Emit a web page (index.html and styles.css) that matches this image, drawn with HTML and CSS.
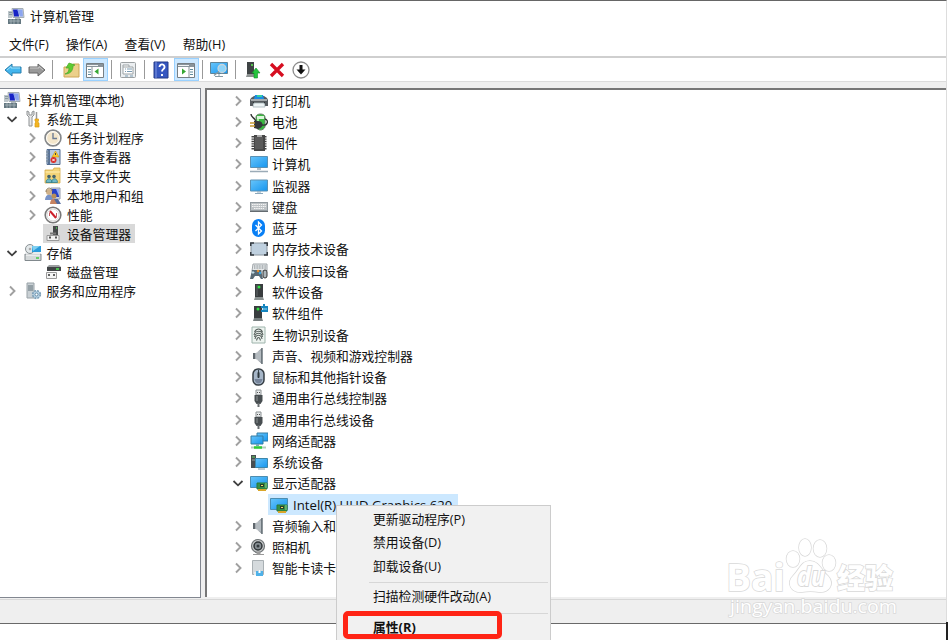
FILE: index.html
```html
<!DOCTYPE html>
<html lang="zh-CN">
<head>
  <meta charset="UTF-8">
  <title>计算机管理</title>
  <link rel="stylesheet" href="styles.css">
</head>
<body>
  <svg class="sprite" xmlns="http://www.w3.org/2000/svg">
    <defs>
      <linearGradient id="sky" x1="0" y1="0" x2="1" y2="1"><stop offset="0" stop-color="#67c5fb"/><stop offset="1" stop-color="#1695ee"/></linearGradient>
      <linearGradient id="metal" x1="0" y1="0" x2="1" y2="0"><stop offset="0" stop-color="#737b82"/><stop offset=".5" stop-color="#c9ced2"/><stop offset="1" stop-color="#747a80"/></linearGradient>
    </defs>
    <symbol id="right" viewBox="0 0 16 16"><path d="M6 3.500 10.500 8 6 12.500" fill="none" stroke="#a0a0a0" stroke-width="1.900"/></symbol>
    <symbol id="down" viewBox="0 0 16 16"><path d="M3.500 6 8 10.300 12.500 6" fill="none" stroke="#404040" stroke-width="1.800"/></symbol>
    <symbol id="manage" viewBox="0 0 18 18"><path d="M5 1.500h11l1 9H6z" fill="#d3d9dd" stroke="#a5aeb4"/><path d="M6 2.500h5l1 7H7z" fill="#1723c5"/><path d="M10 2.500h5.500l.5 7h-3z" fill="#8ca5ef"/><path d="M1 4h4v7H1z" fill="#bdc6ca"/><path d="M2 5.500h3M2 7.500h3" stroke="#8a99a1"/><path d="M1 12h13v5H1z" fill="#647780"/><path d="M2 14h11M4 12v5m3-5v5m4-5v5" stroke="#a9b8bd" stroke-width=".8"/><path d="M8 11h5" stroke="#9aa5ab" stroke-width="1.500"/></symbol>
    <symbol id="tools" viewBox="0 0 18 18"><path d="M3 1v4l2 2v9h3V7l2-2V1L8 2v3H5V2z" fill="#e8e8e8" stroke="#8e9294"/><path d="M12.500 2v8" stroke="#999" stroke-width="1.500"/><path d="M11 9h3.500v2l-1 1 1.500 1v4h-4v-4l1-1-1-1z" fill="#f4b522" stroke="#d99c12" stroke-width=".7"/></symbol>
    <symbol id="clock" viewBox="0 0 18 18"><circle cx="9" cy="9" r="7.900" fill="#f3e6cb" stroke="#85888b" stroke-width="1.700"/><circle cx="9" cy="9" r="6.400" fill="none" stroke="#fff"/><path d="M9 4v5.500h4" fill="none" stroke="#6d7d95" stroke-width="1.400"/></symbol>
    <symbol id="event" viewBox="0 0 18 18"><path d="M3 1.500h13v15H3z" fill="#b9cbe0" stroke="#526c91"/><path d="M5 2v14" stroke="#38557f" stroke-width="1.500"/><path d="M2 4h3M2 7h3M2 10h3M2 13h3" stroke="#778795"/><path d="m11.500 3 3.500 6H8z" fill="#ffcc28" stroke="#c69715" stroke-width=".6"/><path d="M11.500 5v2" stroke="#444"/><circle cx="9.500" cy="12" r="3" fill="#d92c28"/><path d="m8.300 10.800 2.400 2.400m0-2.400-2.400 2.400" stroke="#fff"/></symbol>
    <symbol id="share" viewBox="0 0 18 18"><path d="M1 3h8l1-2h6v15H1z" fill="#f3d478" stroke="#d6ab48" stroke-width=".8"/><path d="M1.500 5H16" stroke="#fff0b6"/><circle cx="5" cy="9.500" r="1.800" fill="#45636b"/><circle cx="10" cy="9.500" r="1.800" fill="#45636b"/><path d="M2 15.500c0-5 6-5 6 0zM7.500 15.500c0-5 6-5 6 0z" fill="#6fb7c6" stroke="#307f8e" stroke-width=".8"/></symbol>
    <symbol id="users" viewBox="0 0 18 18"><path d="M7 1h9v11H7z" fill="#cfd4dd" stroke="#959cac"/><path d="M8 2h7v8H8z" fill="#2742c7"/><path d="M12 2h3v7z" fill="#91aaf4"/><circle cx="5" cy="5" r="3" fill="#d0b28a"/><path d="M2 5c0-5 6-5 6-1" stroke="#8b7654" fill="none"/><path d="M1 13c0-7 8-7 8 0" fill="#7893c8"/><circle cx="10" cy="9" r="2.500" fill="#b88f58"/><path d="M6 17c0-7 8-7 8 0z" fill="#c68260"/><path d="M10 12h4l3 5h-4z" fill="#536b9f"/></symbol>
    <symbol id="perf" viewBox="0 0 18 18"><circle cx="9" cy="9" r="7.800" fill="#fff" stroke="#777" stroke-width="1.600"/><circle cx="9" cy="9" r="6" fill="none" stroke="#ccc" stroke-width=".8"/><path d="m6 5 6 7" stroke="#ce1e29" stroke-width="2"/><path d="M5.500 10V6.500m7 5V7" stroke="#c25b62"/></symbol>
    <symbol id="device" viewBox="0 0 18 18"><path d="M9 1h5v9H9z" fill="#46494a"/><path d="M12 3h1" stroke="#47ce51" stroke-width="1.500"/><path d="M6 8.500h6" stroke="#777" stroke-width="2"/><path d="M3 10.500h12v5H3z" fill="#f2f2f2" stroke="#999"/><path d="M6 11.500v2m6-2v2" stroke="#222" stroke-width="1.500"/></symbol>
    <symbol id="storage" viewBox="0 0 18 18"><path d="M1 10h16v6.500H1z" fill="#d5d9da" stroke="#81898d"/><path d="m1 10 2-5h11l3 5z" fill="#e9ecee"/><circle cx="6" cy="5" r="4.500" fill="#e3e8ea" stroke="#8a9194"/><circle cx="6" cy="5" r="1.300" fill="#aaa"/><path d="M8 2h9v6H8z" fill="#2a9bdc"/><path d="M8 2h8l-7 5z" fill="#81d0f0"/><path d="M2 11h14" stroke="#fff"/><path d="M12 14h3" stroke="#43c844" stroke-width="1.500"/></symbol>
    <symbol id="disk" viewBox="0 0 18 18"><path d="M3 4h14v4H3z" fill="#414446"/><path d="m3 4 2-2h10l2 2z" fill="#9c9fa1"/><path d="M12 6h3" stroke="#50e657" stroke-width="1.500"/><path d="M2.500 9.500h10v6h-10z" fill="#f5f5f5" stroke="#9a9a9a"/><path d="M5 11v2m5-2v2" stroke="#333" stroke-width="1.500"/></symbol>
    <symbol id="service" viewBox="0 0 18 18"><path d="M3 1h7v15H3z" fill="#c9d0d4" stroke="#99a2a7"/><path d="M4 4h5M4 6h5M4 8h5" stroke="#617078"/><circle cx="12.500" cy="12.500" r="3.800" fill="#b7d3e5" stroke="#7fa0b8" stroke-width="1.700" stroke-dasharray="2 1"/><circle cx="12.500" cy="12.500" r="1.500" fill="#fff" stroke="#678ca5"/></symbol>

    <symbol id="printer" viewBox="0 0 18 18"><path d="M1 6 4 4h10l3 2 1 2v6h-3v-3H3v3H0V8z" fill="#555b5f"/><path d="M1 7h16v2H1z" fill="#a4aaad"/><path d="M5 3h8l1 4H4z" fill="#1b8de2"/><path d="M7 3h5v2H7z" fill="#35d0a0"/><path d="M3 10h12v2H3z" fill="#303638"/><path d="M4 11h10l1 4H3z" fill="#edf4f5" stroke="#b4c1c5"/></symbol>
    <symbol id="battery" viewBox="0 0 18 18"><path d="M6 4c0-4 9-4 9 0v10c-2 4-7 4-9 0z" fill="#38b83f" stroke="#68806a"/><path d="M7 3h7v3H7z" fill="#dcf6dc"/><path d="M8 6v5" stroke="#a5ec98" stroke-width="2"/><path d="M1 1c0 4 4 3 5 8M12 12c6 1 7-5 3-6" fill="none" stroke="#333" stroke-width="1.400"/><path d="M4 8h4c6 0 6 7 0 8l-4-1z" fill="#34383a"/><path d="M0 10h5m-5 3h5" stroke="#c59b31" stroke-width="1.600"/></symbol>
    <symbol id="chip" viewBox="0 0 18 18"><path d="M4 1h11v16H4z" fill="#484848"/><path d="M3 2v14M15 2v14" stroke="#444" stroke-width="3" stroke-dasharray="1.400 1"/><path d="M7 1h5v2H7z" fill="#aaa"/><path d="M5 3h8v12H5z" fill="#5a5a5a"/></symbol>
    <symbol id="computer" viewBox="0 0 18 18"><path d="M.5 1.500h17v11H.5z" fill="url(#sky)" stroke="#5a91b4"/><path d="M7 14h4M0 16.500h18" stroke="#9babb7" stroke-width="1.300"/></symbol>
    <symbol id="monitor" viewBox="0 0 18 18"><path d="M.5 3h17v11H.5z" fill="url(#sky)" stroke="#5a91b4"/><path d="M7 15h4M5 16.500h8" stroke="#8ca8bc"/></symbol>
    <symbol id="keyboard" viewBox="0 0 18 18"><path d="M0 4h18v10H0z" fill="#929a9f"/><path d="M1 5h16v7H1z" fill="#bdc2c5"/><path d="M2 6.500h14M2 8.500h14M4 10.500h10" stroke="#f5f5f5" stroke-dasharray="1.500 .7"/><path d="M0 13.500h18" stroke="#646b70"/></symbol>
    <symbol id="bluetooth" viewBox="0 0 18 18"><rect x="2" y="0" width="13" height="18" rx="6.500" fill="#087ff5"/><path d="m5.500 6 6 6-3 3V3l3 3-6 6" fill="none" stroke="#fff" stroke-width="1.300"/></symbol>
    <symbol id="memory" viewBox="0 0 18 18"><path d="M1 3h16v12H1z" fill="#bfd0df" stroke="#8b969f"/><path d="M.7 6V3H4m10 0h3.300v3m0 6v3H14M4 15H.7v-3" fill="none" stroke="#353b42" stroke-width="1.500"/></symbol>
    <symbol id="hid" viewBox="0 0 18 18"><path d="M3 2h14v7H2z" fill="#e5e8ea" stroke="#a0a6aa"/><path d="M4 4h12M4 6h12" stroke="#7e878b" stroke-dasharray="1 .6"/><path d="m2 8-2 9h3l2-3h4l2 3h2l-2-9z" fill="#596a75"/><path d="M3 9v3M1.500 10.500h3" stroke="#c1dae5"/><circle cx="8" cy="9" r="1.200" fill="#e9902c"/><circle cx="10" cy="11" r="1.200" fill="#36a8e4"/><rect x="13" y="8" width="4" height="8" rx="2" fill="#aab4b9" stroke="#333"/></symbol>
    <symbol id="software" viewBox="0 0 18 18"><path d="M5 1h8v13H5z" fill="#393d3f"/><path d="M7 2v11" stroke="#606668"/><circle cx="9" cy="4" r="1.500" fill="#33e345"/><path d="M5 14h8l1 3H4z" fill="#8a9191"/></symbol>
    <symbol id="component" viewBox="0 0 18 18"><path d="M4 2h8v12H4z" fill="#393d3f"/><circle cx="8" cy="5" r="1.500" fill="#33e345"/><path d="M4 14h8l1 3H3z" fill="#777f80"/><path d="M11 2h2V0h2v2h3v6h-7V6h2V4h-2z" fill="#1685bf"/><path d="M12 5h5" stroke="#8bd7f5"/></symbol>
    <symbol id="finger" viewBox="0 0 18 18"><path d="M2 1h13v16H2z" fill="#edf4f0" stroke="#9eb4ac"/><path d="M4.500 6c2-4 6-4 8 0M4 9c1-5 8-5 9 0M4.500 11c1-5 7-5 8 0M5 13c1-5 6-5 7 0M6.500 14.500c1-4 3-4 4 0" stroke="#59625f" fill="none" stroke-width="1.100"/></symbol>
    <symbol id="speaker" viewBox="0 0 18 18"><path d="M3 6h3l6-5v16l-6-5H3z" fill="url(#metal)"/><path d="m11 3-4 3v6l4 3" fill="#b4bbc0"/><path d="M4 6v6" stroke="#60686e" stroke-width="2"/><path d="M12 1v16" stroke="#69737a" stroke-width="1.500"/></symbol>
    <symbol id="mouse" viewBox="0 0 18 18"><rect x="3" y="1" width="11" height="16" rx="5" fill="#a6b6c8" stroke="#363e44" stroke-width="1.500"/><path d="M8.500 2v8" stroke="#38434b"/><rect x="7.500" y="4" width="2" height="6" rx="1" fill="#2d373d"/><path d="M4.500 11c1 6 7 6 8 0" fill="#76849a"/></symbol>
    <symbol id="usb" viewBox="0 0 18 18"><path d="M6 1h5v5H6z" fill="#e7eaeb" stroke="#8b9193"/><path d="M7.500 3v1m2-1v1" stroke="#555"/><path d="M4.500 6h8v6l-2 3h-4l-2-3z" fill="#484e51"/><path d="M7.500 14h2v4h-2z" fill="#686d70"/><path d="M7 7v5" stroke="#8b9193"/></symbol>
    <symbol id="network" viewBox="0 0 18 18"><path d="M7 1h11v8H7z" fill="url(#sky)" stroke="#347ca4"/><path d="M1 4h12v8H1z" fill="url(#sky)" stroke="#347ca4"/><path d="M6 12h3v2H6z" fill="#7ca7ba"/><path d="M1 15.500h15" stroke="#b5cfbb" stroke-width="2"/><path d="M4 15.500h8" stroke="#31cc38" stroke-width="2.500"/></symbol>
    <symbol id="system" viewBox="0 0 18 18"><path d="M1 2h5v13H1z" fill="#484e51"/><path d="M2 4h3" stroke="#63d760"/><path d="M2 7h3" stroke="#9ba2a5"/><path d="M5.500 5.500h12v9h-12z" fill="url(#sky)" stroke="#3d87aa"/><path d="M8 16h7" stroke="#8097a4"/></symbol>
    <symbol id="display" viewBox="0 0 18 18"><path d="M.5 2.500h17v11H.5z" fill="url(#sky)" stroke="#4d8db0"/><path d="M7 9h10v6H7z" fill="#359048" stroke="#2b7937"/><path d="M10 10h4v3h-4z" fill="#283f2b"/><path d="M11 11h2v1h-2z" fill="#f0df65"/><path d="M8 16h8" stroke="#daa62a" stroke-width="2"/><path d="M16 9v5" stroke="#93d18d"/></symbol>
    <symbol id="camera" viewBox="0 0 18 18"><circle cx="8" cy="8" r="6.500" fill="#c7cacb" stroke="#6f7476" stroke-width="1.200"/><circle cx="8" cy="8" r="4" fill="#858d92" stroke="#2e3437" stroke-width="1.500"/><circle cx="8" cy="8" r="1.500" fill="#333a3d"/><path d="M7 14h3v2H7zM3 16.500h11" fill="#999" stroke="#999"/></symbol>
    <symbol id="card" viewBox="0 0 18 18"><path d="M2.500 1.500h11v14h-11z" fill="#d5dadd" stroke="#a9b0b4"/><path d="M4 13h9v3H4z" fill="#e8edef"/><path d="M6 12h7v5H6z" fill="#4eb1e8"/><path d="M8 13h3M9.500 11v3" stroke="#fff"/></symbol>
    <symbol id="back" viewBox="0 0 18 18"><path d="m1 9 7-6v3h9v6H8v3z" fill="#43b5ed" stroke="#287fae"/><path d="m3 9 4-3.500V7h9" stroke="#a0e2fb" fill="none"/></symbol>
    <symbol id="forward" viewBox="0 0 18 18"><path d="m17 9-7-6v3H1v6h9v3z" fill="#999" stroke="#666"/><path d="M2 7h9V5.500L15 9" stroke="#c8c8c8" fill="none"/></symbol>
    <symbol id="folder" viewBox="0 0 18 18"><path d="M2 6h7l2-3h6v13H2z" fill="#ecd08a" stroke="#cfa654"/><path d="M3 13c3-1 4-3 4-6H4l3-5 6 2-2 1c0 5-3 8-8 8z" fill="#5fcb30" stroke="#45a82b" stroke-width=".7"/></symbol>
    <symbol id="panel" viewBox="0 0 18 18"><path d="M.5 2.500h17v14H.5z" fill="#fff" stroke="#777f84"/><path d="M1 3h16v3H1z" fill="#89949b"/><path d="M1 4.500h11" stroke="#f1f3f4"/><path d="M2 8.500h3M2 11h3M2 13.500h3" stroke="#5e8c9f"/><path d="M6 6v10" stroke="#899398"/><path d="M12.500 7.500v6L8.500 10.500z" fill="#36a733"/></symbol>
    <symbol id="panel-right" viewBox="0 0 18 18"><path d="M.5 2.500h17v14H.5z" fill="#fff" stroke="#777f84"/><path d="M1 3h16v3H1z" fill="#89949b"/><path d="M1 4.500h11" stroke="#f1f3f4"/><path d="M12 6v10" stroke="#899398"/><path d="M13 8.500h3m-3 2.500h3m-3 2.500h3" stroke="#5e8c9f"/><path d="M5 7.500v6l4-3z" fill="#36a733"/></symbol>
    <symbol id="props" viewBox="0 0 18 18"><rect x="1.500" y="1.500" width="15" height="15" rx="1" fill="#eceff1" stroke="#9ca1a3"/><path d="M4 6h10v7H4zM4 6V4h6v2" fill="#fff" stroke="#9ca3a6"/><path d="M6 8h1m1 0h5M6 10.500h1m1 0h5M6 15h3m2 0h3" stroke="#7b9bb2"/></symbol>
    <symbol id="help" viewBox="0 0 18 18"><path d="M2 1h14v16H2z" fill="#3556c0" stroke="#253b87"/><path d="M4 1v16" stroke="#8196df"/><path d="M7.500 6c.2-4 5.500-3 5 .3-.2 1.800-2.500 2-2.500 4.200M10 13v2" fill="none" stroke="#fff" stroke-width="1.900"/></symbol>
    <symbol id="scan" viewBox="0 0 18 18"><path d="M.5 1.500h17v11H.5z" fill="url(#sky)" stroke="#5f8498"/><path d="M5 15.500h8M9 13v3" stroke="#879aa4"/><circle cx="12" cy="7.500" r="4" fill="#8ed4f9" stroke="#c8d5dc" stroke-width="1.300"/><path d="m9 10.500-5 4" stroke="#8799a1" stroke-width="1.500"/></symbol>
    <symbol id="update" viewBox="0 0 18 18"><path d="M3 1h7v12H3z" fill="#3f4445"/><path d="M7 4h2" stroke="#62ed55" stroke-width="1.500"/><path d="M3 13h8l1 3H2z" fill="#8d9292"/><path d="m12 7 4 5h-2.500v5h-3.500v-5H8z" fill="#25c43d" stroke="#13912a" stroke-width=".6"/></symbol>
    <symbol id="delete" viewBox="0 0 18 18"><path d="m3 3 12 12M15 3 3 15" stroke="#d60e20" stroke-width="3.300"/></symbol>
    <symbol id="disable" viewBox="0 0 18 18"><circle cx="9" cy="9" r="8" fill="#fff" stroke="#8c8c8c" stroke-width="1.300"/><path d="M9 4v6" stroke="#111" stroke-width="3"/><path d="m4.500 8.500 4.500 5 4.500-5z" fill="#111"/></symbol>
  </svg>

  <div class="window">
    <header class="titlebar"><svg class="icon"><use href="#manage"/></svg><span>计算机管理</span></header>
    <nav class="menubar"><span>文件(F)</span><span>操作(A)</span><span>查看(V)</span><span>帮助(H)</span></nav>
    <div class="toolbar">
      <span class="tool"><svg class="icon"><use href="#back"/></svg></span>
      <span class="tool"><svg class="icon"><use href="#forward"/></svg></span>
      <i class="sep sep-first"></i>
      <span class="tool"><svg class="icon"><use href="#folder"/></svg></span>
      <span class="tool active"><svg class="icon"><use href="#panel"/></svg></span>
      <i class="sep"></i>
      <span class="tool wide"><svg class="icon"><use href="#props"/></svg></span>
      <i class="sep"></i>
      <span class="tool wide"><svg class="icon"><use href="#help"/></svg></span>
      <span class="tool active"><svg class="icon"><use href="#panel-right"/></svg></span>
      <i class="sep"></i>
      <span class="tool wide"><svg class="icon"><use href="#scan"/></svg></span>
      <i class="sep"></i>
      <span class="tool update"><svg class="icon"><use href="#update"/></svg></span>
      <span class="tool"><svg class="icon"><use href="#delete"/></svg></span>
      <span class="tool"><svg class="icon"><use href="#disable"/></svg></span>
    </div>

    <main class="panes">
      <div class="nav-tree">
        <div class="row root"><svg class="icon"><use href="#manage"/></svg><span>计算机管理(本地)</span></div>
        <div class="row group"><svg class="arrow"><use href="#down"/></svg><svg class="icon"><use href="#tools"/></svg><span>系统工具</span></div>
        <div class="row leaf"><svg class="arrow"><use href="#right"/></svg><svg class="icon"><use href="#clock"/></svg><span>任务计划程序</span></div>
        <div class="row leaf"><svg class="arrow"><use href="#right"/></svg><svg class="icon"><use href="#event"/></svg><span>事件查看器</span></div>
        <div class="row leaf"><svg class="arrow"><use href="#right"/></svg><svg class="icon"><use href="#share"/></svg><span>共享文件夹</span></div>
        <div class="row leaf"><svg class="arrow"><use href="#right"/></svg><svg class="icon"><use href="#users"/></svg><span>本地用户和组</span></div>
        <div class="row leaf"><svg class="arrow"><use href="#right"/></svg><svg class="icon"><use href="#perf"/></svg><span>性能</span></div>
        <div class="row leaf"><svg class="arrow"></svg><div class="current"><svg class="icon"><use href="#device"/></svg><span>设备管理器</span></div></div>
        <div class="row group"><svg class="arrow"><use href="#down"/></svg><svg class="icon"><use href="#storage"/></svg><span>存储</span></div>
        <div class="row leaf"><svg class="arrow"></svg><svg class="icon"><use href="#disk"/></svg><span>磁盘管理</span></div>
        <div class="row group"><svg class="arrow"><use href="#right"/></svg><svg class="icon"><use href="#service"/></svg><span>服务和应用程序</span></div>
      </div>

      <div class="device-tree">
        <div class="row"><svg class="arrow"><use href="#right"/></svg><svg class="icon"><use href="#printer"/></svg><span>打印机</span></div>
        <div class="row"><svg class="arrow"><use href="#right"/></svg><svg class="icon"><use href="#battery"/></svg><span>电池</span></div>
        <div class="row"><svg class="arrow"><use href="#right"/></svg><svg class="icon"><use href="#chip"/></svg><span>固件</span></div>
        <div class="row"><svg class="arrow"><use href="#right"/></svg><svg class="icon"><use href="#computer"/></svg><span>计算机</span></div>
        <div class="row"><svg class="arrow"><use href="#right"/></svg><svg class="icon"><use href="#monitor"/></svg><span>监视器</span></div>
        <div class="row"><svg class="arrow"><use href="#right"/></svg><svg class="icon"><use href="#keyboard"/></svg><span>键盘</span></div>
        <div class="row"><svg class="arrow"><use href="#right"/></svg><svg class="icon"><use href="#bluetooth"/></svg><span>蓝牙</span></div>
        <div class="row"><svg class="arrow"><use href="#right"/></svg><svg class="icon"><use href="#memory"/></svg><span>内存技术设备</span></div>
        <div class="row"><svg class="arrow"><use href="#right"/></svg><svg class="icon"><use href="#hid"/></svg><span>人机接口设备</span></div>
        <div class="row"><svg class="arrow"><use href="#right"/></svg><svg class="icon"><use href="#software"/></svg><span>软件设备</span></div>
        <div class="row"><svg class="arrow"><use href="#right"/></svg><svg class="icon"><use href="#component"/></svg><span>软件组件</span></div>
        <div class="row"><svg class="arrow"><use href="#right"/></svg><svg class="icon"><use href="#finger"/></svg><span>生物识别设备</span></div>
        <div class="row"><svg class="arrow"><use href="#right"/></svg><svg class="icon"><use href="#speaker"/></svg><span>声音、视频和游戏控制器</span></div>
        <div class="row"><svg class="arrow"><use href="#right"/></svg><svg class="icon"><use href="#mouse"/></svg><span>鼠标和其他指针设备</span></div>
        <div class="row"><svg class="arrow"><use href="#right"/></svg><svg class="icon"><use href="#usb"/></svg><span>通用串行总线控制器</span></div>
        <div class="row"><svg class="arrow"><use href="#right"/></svg><svg class="icon"><use href="#usb"/></svg><span>通用串行总线设备</span></div>
        <div class="row"><svg class="arrow"><use href="#right"/></svg><svg class="icon"><use href="#network"/></svg><span>网络适配器</span></div>
        <div class="row"><svg class="arrow"><use href="#right"/></svg><svg class="icon"><use href="#system"/></svg><span>系统设备</span></div>
        <div class="row"><svg class="arrow"><use href="#down"/></svg><svg class="icon"><use href="#display"/></svg><span>显示适配器</span></div>
        <div class="row child"><div class="selected"><svg class="icon"><use href="#display"/></svg><span>Intel(R) UHD Graphics 620</span></div></div>
        <div class="row"><svg class="arrow"><use href="#right"/></svg><svg class="icon"><use href="#speaker"/></svg><span>音频输入和</span></div>
        <div class="row"><svg class="arrow"><use href="#right"/></svg><svg class="icon"><use href="#camera"/></svg><span>照相机</span></div>
        <div class="row"><svg class="arrow"><use href="#right"/></svg><svg class="icon"><use href="#card"/></svg><span>智能卡读卡</span></div>
      </div>
    </main>
    <footer class="statusbar"></footer>
  </div>

  <div class="context-menu">
    <div class="item">更新驱动程序(P)</div>
    <div class="item">禁用设备(D)</div>
    <div class="item">卸载设备(U)</div>
    <hr>
    <div class="item">扫描检测硬件改动(A)</div>
    <hr>
    <div class="item default">属性(R)</div>
  </div>
  <div class="highlight"></div>

  <svg class="watermark" viewBox="0 0 180 90">
    <g class="paw">
      <ellipse cx="71" cy="21" rx="6.500" ry="8"/>
      <ellipse cx="83" cy="9.500" rx="6" ry="8.500"/>
      <ellipse cx="98" cy="10.500" rx="6.500" ry="8.500"/>
      <ellipse cx="107" cy="25" rx="6.500" ry="8"/>
      <path d="M88 23c9 0 11 9 18 15 7 8 1 17-9 16-6-1-11-1-17 0-11 1-16-9-9-16 7-7 8-15 17-15z"/>
    </g>
    <text class="logo" x="4" y="53" textLength="59" lengthAdjust="spacingAndGlyphs">Bai</text>
    <text class="du" x="75" y="48" textLength="28" lengthAdjust="spacingAndGlyphs">du</text>
    <text class="cn" x="115" y="51">经验</text>
    <text class="url" x="8" y="75" textLength="167" lengthAdjust="spacingAndGlyphs">jingyan.baidu.com</text>
  </svg>
  <div class="edge"></div>
</body>
</html>
```
FILE: styles.css
```css
* { box-sizing: border-box; }
body { margin: 0; width: 949px; height: 640px; overflow: hidden; position: relative; background: #fff; color: #111; font-family: "Open Sans", "Noto Sans CJK SC", sans-serif; font-size: 12.8px; line-height: 18px; white-space: nowrap; }
.sprite { position: absolute; width: 0; height: 0; }
.icon { width: 18px; height: 18px; flex: none; display: block; }
.arrow { width: 16px; height: 16px; flex: none; }

.window { width: 947px; height: 640px; border-top: 1px solid #666; border-right: 1px solid #ddd; }
.titlebar { display: flex; align-items: center; gap: 5px; height: 30px; padding-left: 7px; }
.menubar { display: flex; align-items: center; gap: 17.3px; height: 25px; padding: 1px 0 0 9px; }
.toolbar { display: flex; align-items: center; height: 26px; padding-left: 1px; border-top: 2px solid #cfcfcf; border-bottom: 1px solid #dcdcdc; }
.tool { display: flex; align-items: center; justify-content: center; width: 24px; height: 23px; }
.tool.wide { width: 26px; }
.tool.active { width: 25px; background: #cce8ff; border: 1px solid #99d1ff; }
.folder-tool { margin-right: 1px; }
.sep { width: 1px; height: 19px; margin: 0 3px; background: #999; }
.sep-first { margin-right: 5.5px; }
.update { margin-left: 2px; }

.panes { display: flex; gap: 4px; height: 517px; padding-top: 6px; background: #efefef; }
.nav-tree { width: 201px; height: 510px; padding-top: 1px; background: #fff; border-top: 1px solid #828790; border-right: 1px solid #828790; border-bottom: 1px solid #828790; }
.device-tree { flex: 1; height: 509px; padding: 0 0 0 23px; background: #fff; border-top: 2px solid #777; border-left: 2px solid #777; }
.row { display: flex; align-items: center; }
.nav-tree .row { height: 19.2px; }
.root { padding-left: 3px; gap: 6px; }
.group { padding-left: 4px; }
.group .icon { margin: 0 4.5px 0 4px; }
.leaf { padding-left: 24px; }
.leaf .icon { margin: 0 5px 0 4px; }
.current { display: flex; align-items: center; height: 19px; margin-left: 3px; padding-right: 4px; background: #d9d9d9; }
.current .icon { margin-left: 1px; }
.device-tree .row { height: 21.27px; }
.device-tree .icon { margin: 0 4.300px 0 3.700px; }
.child { padding-left: 38px; }
.selected { display: flex; align-items: center; height: 21px; width: 190px; background: #cce8ff; font-size: 13.2px; }
.device-tree .selected .icon { margin: 0 5px 0 2px; }

.statusbar { height: 25px; background: #efefef; border-top: 1px solid #d7d7d7; border-bottom: 1px solid #696969; }

.context-menu { position: absolute; left: 336px; top: 505px; width: 215px; height: 140px; padding: 2px 2px 0 32px; background: #f1f1f1; border: 1px solid #ccc; }
.item { height: 23.3px; padding-left: 4px; line-height: 23px; }
.context-menu hr { height: 1px; margin: 4px 0 2.500px; border: 0; background: #d7d7d7; }
.default { font-weight: bold; }
.highlight { position: absolute; left: 343px; top: 611px; width: 159px; height: 28px; border: 5px solid #ff2415; border-radius: 5px; }

.watermark { position: absolute; left: 722px; top: 538px; width: 180px; height: 90px; fill: #fff; stroke: #d9d9d9; stroke-width: 1.5px; paint-order: stroke; }
.logo, .du { font: bold 38px "Open Sans", sans-serif; }
.du { font-size: 27px; font-style: italic; stroke-width: 2px; }
.cn { font: 900 28px "Noto Sans CJK SC", sans-serif; }
.url { font: 18px "Open Sans", sans-serif; }
.edge { position: absolute; left: 946px; top: 622px; width: 2px; height: 18px; background: #222; }
```
